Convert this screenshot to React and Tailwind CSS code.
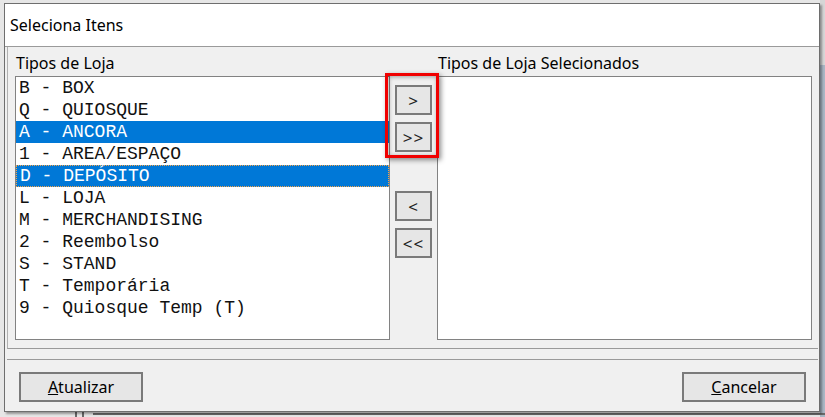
import React from "react";

const items = [
  { t: "B - BOX" },
  { t: "Q - QUIOSQUE" },
  { t: "A - ANCORA", sel: true },
  { t: "1 - AREA/ESPAÇO" },
  { t: "D - DEPÓSITO", sel: true, focus: true },
  { t: "L - LOJA" },
  { t: "M - MERCHANDISING" },
  { t: "2 - Reembolso" },
  { t: "S - STAND" },
  { t: "T - Temporária" },
  { t: "9 - Quiosque Temp (T)" },
];

const ui = { fontFamily: '"Noto Sans", "Open Sans", sans-serif' };
const mono = { fontFamily: '"Liberation Mono", "Courier New", monospace' };

function ArrowBtn({ children }) {
  return (
    <div className="w-[37px] h-[30px] border-2 border-[#7a7a7a] bg-[#e6e6e6] flex items-center justify-center text-[17px] leading-none text-[#222] tracking-[1px]">
      {children}
    </div>
  );
}

export default function App() {
  return (
    <div className="relative w-[825px] h-[417px] overflow-hidden bg-[#e6e6e6]" style={ui}>
      {/* desktop bits behind */}
      <div className="absolute left-[820px] top-0 w-[5px] h-[65px] bg-[#d6d6d6]" />
      <div className="absolute left-[820px] top-[65px] w-[5px] h-[352px] bg-[#a9b6c4]" />
      <div className="absolute left-[75px] top-[412px] w-[2px] h-[5px] bg-[#6a6a6a]" />
      <div className="absolute left-[82px] top-[412px] w-[2px] h-[5px] bg-[#6a6a6a]" />
      <div className="absolute left-[93px] top-[413px] w-[732px] h-[2px] bg-[#6a6a6a]" />

      {/* dialog */}
      <div className="absolute left-[4px] top-[3px] w-[816px] h-[409px] border border-[#6e6e6e] bg-[#f0f0f0] flex flex-col shadow-[2px_2px_2px_rgba(0,0,0,0.35)]">
        <div className="h-[43px] shrink-0 bg-white border-b border-[#9a9a9a] flex items-center pl-[5px] text-[16px] text-black">
          Seleciona Itens
        </div>

        <div className="h-[302px] shrink-0 border-b border-[#9a9a9a] border-l border-l-[#b0b0b0] ml-[2px] mr-[1px] flex pl-[7px]">
          {/* left column */}
          <div className="w-[375px] flex flex-col">
            <div className="h-[29px] pt-[5px] pl-[1px] text-[16px] leading-[22px] text-black">Tipos de Loja</div>
            <div className="h-[264px] border border-[#828282] bg-white text-[18px] leading-[22px] text-[#111]" style={mono}>
              {items.map((it, i) => (
                <div
                  key={i}
                  className={
                    "h-[22px] pl-[3px] whitespace-pre " +
                    (it.sel ? "bg-[#0078d7] text-white " : "") +
                    (it.focus ? "border border-dotted border-[#f5a54a] pl-[2px] leading-[20px]" : "")
                  }
                >
                  {it.t}
                </div>
              ))}
            </div>
          </div>

          {/* middle buttons */}
          <div className="w-[47px] flex flex-col pl-[5px] pt-[38px]">
            <ArrowBtn>&gt;</ArrowBtn>
            <div className="h-[7px]" />
            <ArrowBtn>&gt;&gt;</ArrowBtn>
            <div className="h-[39px]" />
            <ArrowBtn>&lt;</ArrowBtn>
            <div className="h-[7px]" />
            <ArrowBtn>&lt;&lt;</ArrowBtn>
          </div>

          {/* right column */}
          <div className="w-[375px] flex flex-col">
            <div className="h-[29px] pt-[5px] pl-[1px] text-[16px] leading-[22px] text-black">Tipos de Loja Selecionados</div>
            <div className="h-[264px] border border-[#828282] bg-white" />
          </div>
        </div>

        <div className="h-[11px] shrink-0 border-b border-[#9a9a9a] ml-[2px] mr-[1px]" />

        <div className="flex-1 flex justify-between items-start pt-[12px] pl-[14px] pr-[13px]">
          <div className="w-[124px] h-[30px] border-2 border-[#7a7a7a] bg-[#e6e6e6] flex items-center justify-center text-[16px] text-black">
            <span><span className="underline">A</span>tualizar</span>
          </div>
          <div className="w-[124px] h-[30px] border-2 border-[#7a7a7a] bg-[#e6e6e6] flex items-center justify-center text-[16px] text-black">
            <span><span className="underline">C</span>ancelar</span>
          </div>
        </div>
      </div>

      {/* red highlight annotation */}
      <div className="absolute left-[385px] top-[73px] w-[54px] h-[85px] border-[3px] border-[#f00000] shadow-[2px_2px_5px_rgba(0,0,0,0.45),inset_1px_1px_4px_rgba(0,0,0,0.35)]" />
    </div>
  );
}
